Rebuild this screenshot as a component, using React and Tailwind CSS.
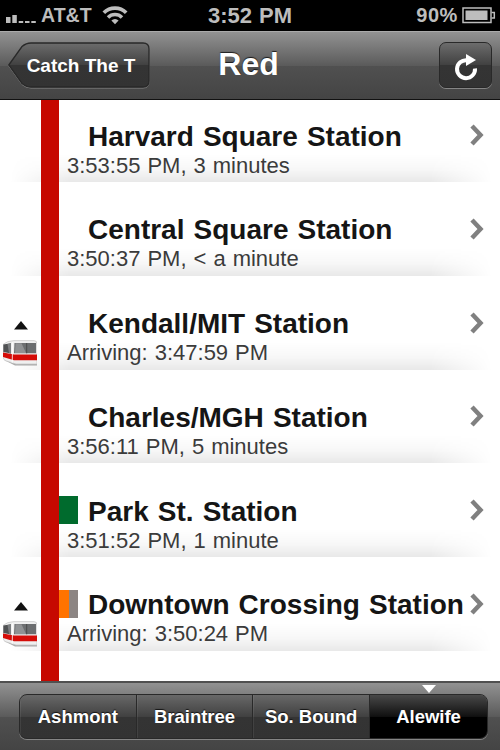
const STATIONS = [
  { name: "Harvard Square Station", time: "3:53:55 PM, 3 minutes" },
  { name: "Central Square Station", time: "3:50:37 PM, < a minute" },
  { name: "Kendall/MIT Station", time: "Arriving: 3:47:59 PM", train: true },
  { name: "Charles/MGH Station", time: "3:56:11 PM, 5 minutes" },
  { name: "Park St. Station", time: "3:51:52 PM, 1 minute", lines: ["bg-[#006b2d]"] },
  { name: "Downtown Crossing Station", time: "Arriving: 3:50:24 PM", train: true, lines: ["bg-[#ff7300]", "bg-[#8c8583]"] },
]

const DIRECTIONS = ["Ashmont", "Braintree", "So. Bound", "Alewife"]

function StatusBar() {
  return (
    <div className="grid h-[31px] shrink-0 grid-cols-[1fr_auto_1fr] items-center bg-black text-[#bdbdbd]">
      <div className="flex items-center pl-[6px]">
        <svg width="31" height="10" fill="#bdbdbd" className="mt-[6px]">
          <rect x="0" y="3" width="4.5" height="6" />
          <rect x="6.3" y="1" width="4.5" height="8" />
          <rect x="12.7" y="7" width="4.5" height="2" />
          <rect x="19" y="7" width="4.5" height="2" />
          <rect x="25.3" y="7" width="4.5" height="2" />
        </svg>
        <span className="ml-[4px] text-[19.5px] leading-[31px] font-bold">AT&amp;T</span>
        <svg width="26" height="20" viewBox="0 0 26 20" fill="none" stroke="#bdbdbd" className="-mt-[1px] ml-[10px]">
          <path d="M1.8 7.7a15.8 15.8 0 0 1 22.4 0" strokeWidth="3.7" />
          <path d="M6 12.4a9.9 9.9 0 0 1 14 0" strokeWidth="3.5" />
          <path d="M13 19.300l-3.600-3.700a5 5 0 0 1 7.200 0z" fill="#bdbdbd" stroke="none" />
        </svg>
      </div>
      <span className="text-[22px] leading-[31px] font-bold [word-spacing:1px]">3:52 PM</span>
      <div className="flex items-center justify-end pr-[4px]">
        <span className="text-[20px] leading-[31px] font-bold tracking-[0.6px]">90%</span>
        <svg width="34" height="17" className="ml-[4px]">
          <rect x="1" y="1" width="28" height="14.5" fill="none" stroke="#bdbdbd" strokeWidth="1.5" />
          <rect x="3.5" y="3.5" width="22" height="9.5" fill="#bdbdbd" />
          <path d="M29.5 5.5h2.8v5.5h-2.8" fill="none" stroke="#bdbdbd" strokeWidth="1.5" />
        </svg>
      </div>
    </div>
  )
}

function NavBar() {
  return (
    <div className="grid h-[69px] shrink-0 grid-cols-[1fr_auto_1fr] items-center border-t border-b border-t-[#aaa] border-b-[#111] bg-[linear-gradient(#929292_0%,#5b5b5b_50%,#505050_51%,#444_100%)] px-2 text-white [text-shadow:0_-1px_1px_rgba(0,0,0,0.75)]">
      <button className="relative -mt-[1px] h-[47px] w-[143px]">
        <svg width="143" height="49" className="absolute inset-0">
          <defs>
            <linearGradient id="back" x1="0" y1="0" x2="0" y2="1">
              <stop offset="0" stopColor="#6c6c6c" />
              <stop offset="0.5" stopColor="#414141" />
              <stop offset="0.51" stopColor="#343434" />
              <stop offset="1" stopColor="#333" />
            </linearGradient>
          </defs>
          <path d="M.8 24L14 5.500Q18 2 23 2H135Q141 2 141 8V40Q141 46 135 46H23Q18 46 14 42.500Z" fill="none" stroke="#858585" />
          <path d="M.8 23L14 4.500Q18 1 23 1H135Q141 1 141 7V39Q141 45 135 45H23Q18 45 14 41.500Z" fill="url(#back)" stroke="#292929" strokeWidth="1.3" />
        </svg>
        <span className="relative ml-[3px] text-[19px] leading-[43px] font-bold whitespace-nowrap">Catch The T</span>
      </button>
      <h1 className="mr-[3px] mb-[3px] text-[32px] leading-[40px] font-bold">Red</h1>
      <button className="-mt-[1px] flex h-[46px] w-[53px] items-center justify-center justify-self-end rounded-[7px] border border-[#292929] bg-[linear-gradient(#6c6c6c_0%,#414141_50%,#343434_51%,#333_100%)] shadow-[0_1px_0_#858585]">
        <svg width="26" height="28" viewBox="0 0 26 28" className="mt-[3px]">
          <path d="M14 7.200A9 9 0 1 0 22 15.500" fill="none" stroke="#fff" strokeWidth="4" />
          <path d="M13 1L23 7L13 13Z" fill="#fff" />
        </svg>
      </button>
    </div>
  )
}

function Train() {
  return (
    <div className="flex flex-col items-end pr-[4px] pb-[4px]">
      <svg width="14" height="9" className="mr-[9px]">
        <path d="M7 0L14 8.500H0Z" fill="#111" />
      </svg>
      <svg width="34" height="26" viewBox="0 0 34 26" className="mt-[10px]">
        <path d="M1 20L12 25.500H34V23Z" fill="#888" opacity=".7" />
        <path d="M0 4.500Q4 .8 11 .6H31Q34 .6 34 4V24H13L2 20.500L0 18Z" fill="#efefef" stroke="#c4c4c4" strokeWidth=".7" />
        <path d="M.3 4.500L8 3.200V13.500L.3 12Z" fill="#505254" />
        <path d="M4.500 4L8 3.200V13.500L6 13Z" fill="#7c7e80" />
        <path d="M11.500 3H33V13.300H11Z" fill="#6c6e70" />
        <path d="M12.500 3.300H18.500L23 13H12Z" fill="#909294" />
        <path d="M23.700 3V13.300" stroke="#4a4a4a" />
        <path d="M0 12.500L11 14.500H34V20.200H11L0 17Z" fill="#d50c08" />
        <path d="M9.700 2L9.200 23" stroke="#fff" strokeWidth="1" opacity=".8" />
      </svg>
    </div>
  )
}

function StationRow({ station }) {
  return (
    <li className="relative flex h-[93.8px] shrink-0 bg-white">
      {/* soft shade along the bottom edge */}
      <div className="absolute inset-x-0 bottom-0 h-[28px] bg-[linear-gradient(rgba(0,0,0,0),rgba(0,0,0,0.03)_55%,rgba(0,0,0,0.09))] [mask-image:linear-gradient(to_right,transparent_10px,black_70px,black_430px,transparent_492px)]" />
      <div className="relative flex w-[41px] flex-col justify-end">{station.train && <Train />}</div>
      <div className="relative -mb-px w-[18px] bg-[#c60800]" />
      <div className="relative flex flex-1 flex-col justify-end pb-[3.5px]">
        <div className="flex h-[30px] items-start">
          <div className="-mt-[1.5px] flex h-[28px] w-[19px]">
            {station.lines?.map((color) => (
              <span key={color} className={`flex-1 ${color}`} />
            ))}
          </div>
          <h2 className="ml-[10px] text-[28px] leading-[28px] font-bold whitespace-nowrap text-[#151515] [word-spacing:1.3px]">{station.name}</h2>
        </div>
        <p className="pl-[8px] text-[22px] leading-[26px] text-[#3b3b3b] [word-spacing:0.9px]">{station.time}</p>
      </div>
      <svg width="14" height="22" className="absolute right-[16px] bottom-[36px]" fill="none" stroke="#808080" strokeWidth="4.500">
        <path d="M2 2L10.500 11L2 20" />
      </svg>
    </li>
  )
}

function DirectionBar() {
  return (
    <div className="h-[69px] shrink-0 border-t-2 border-[#505050] bg-[linear-gradient(#929292_0%,#5b5b5b_50%,#505050_51%,#444_100%)] pt-[11px] pr-[12px] pl-[19px]">
      <div className="flex h-[45px] rounded-[8px] border border-[#292929] bg-[linear-gradient(#686868_0%,#414141_50%,#343434_51%,#333_100%)] shadow-[0_1px_0_#858585]">
        {DIRECTIONS.map((name) =>
          name === "Alewife" ? (
            <button key={name} className="relative w-[117px] rounded-r-[7px] bg-[linear-gradient(#484848_0%,#101010_50%,#000_51%)] text-[18.5px] font-bold text-white">
              <svg width="16" height="8" className="absolute -top-[10px] left-[51px]">
                <path d="M1 0H15L8 8Z" fill="#fff" />
              </svg>
              {name}
            </button>
          ) : (
            <button key={name} className="flex-1 border-r border-[#292929] text-[18.5px] font-bold whitespace-nowrap text-white shadow-[inset_1px_0_0_rgba(255,255,255,0.07)] [text-shadow:0_-1px_1px_rgba(0,0,0,0.75)]">
              {name}
            </button>
          )
        )}
      </div>
    </div>
  )
}

export default function App() {
  return (
    <div className="flex h-[750px] w-[500px] flex-col overflow-hidden bg-white font-['Liberation_Sans',sans-serif]">
      <StatusBar />
      <NavBar />
      <ul className="flex min-h-0 flex-1 flex-col overflow-hidden">
        {/* list is scrolled slightly under the nav bar */}
        <div className="-mt-[11.800px] flex flex-col">
          {STATIONS.map((s) => (
            <StationRow key={s.name} station={s} />
          ))}
        </div>
        <li className="ml-[41px] w-[18px] flex-1 bg-[#c60800]" />
      </ul>
      <DirectionBar />
    </div>
  )
}
